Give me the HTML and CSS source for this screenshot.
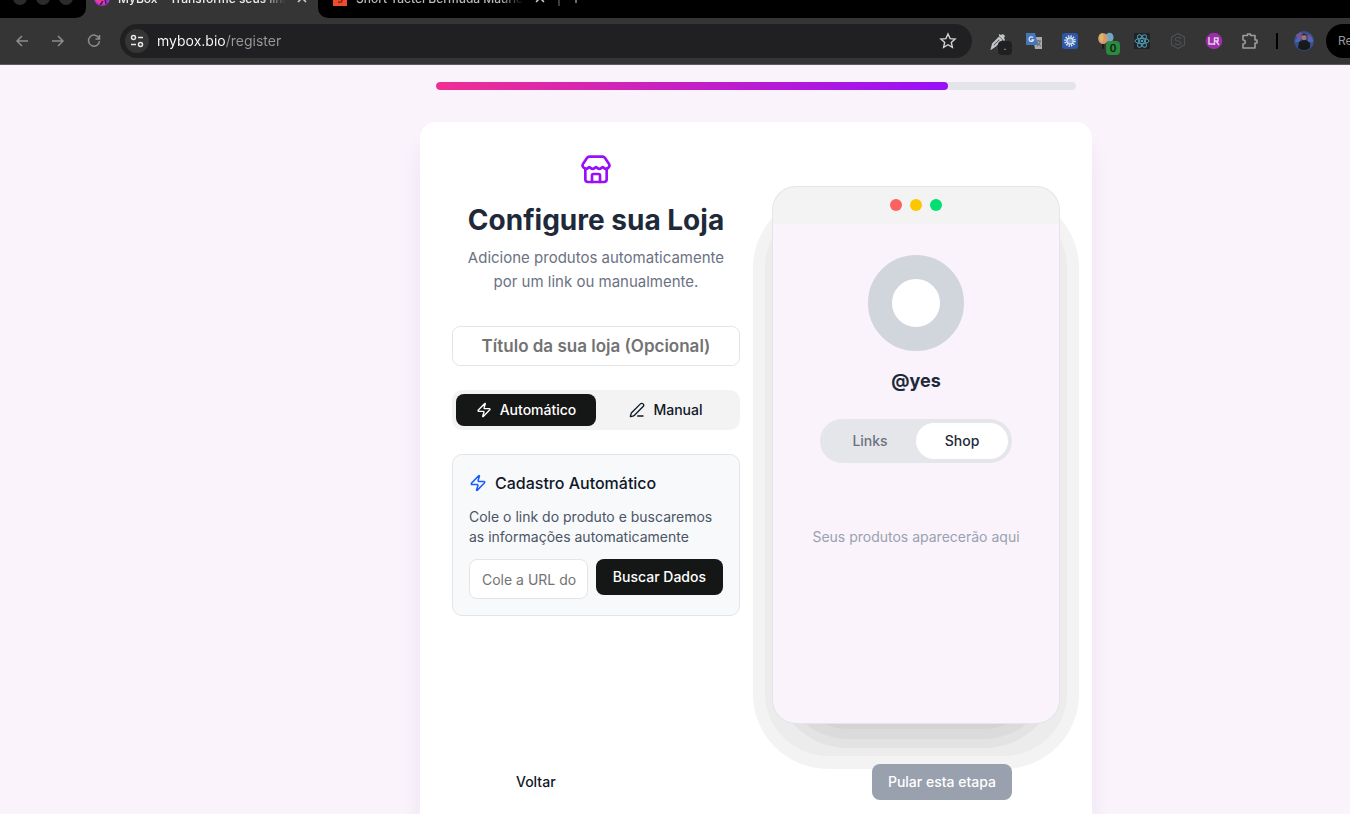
FILE: index.html
```
<!DOCTYPE html>
<html lang="pt-BR">
<head>
    <meta charset="UTF-8">
    <meta name="viewport" content="width=device-width, initial-scale=1.0">
    <title>MyBox - Configure sua Loja</title>
    <link rel="stylesheet" href="styles.css">
</head>
<body>
    <header class="browser">
        <div class="tab-strip">
            <div class="window-dots"><span></span><span></span><span></span></div>
            <div class="browser-tab active">
                <svg class="favicon" viewBox="0 0 16 16"><circle cx="8" cy="8" r="8" fill="#9b35c8"/><path d="M1 8l5 5 3-3 2 4" fill="none" stroke="#f5389c" stroke-width="3"/><path d="M6 15l3-4M11 9l1 5" fill="none" stroke="#3a1d5c" stroke-width="1.500"/></svg>
                <span class="tab-title">MyBox - Transforme seus links</span>
                <button class="tab-close" aria-label="Fechar aba"><svg viewBox="0 0 10 10"><path d="M1 1l8 8M9 1L1 9"/></svg></button>
            </div>
            <div class="browser-tab">
                <svg class="favicon" viewBox="0 0 16 16"><path fill="#ee4d2d" d="M1 3h14v13H1z"/><path d="M10 7c-4-2-5 1-2 2s3 4-2 3" fill="none" stroke="#8a2414" stroke-width="1.5"/></svg>
                <span class="tab-title">Short Tactel Bermuda Mauricinho</span>
                <button class="tab-close" aria-label="Fechar aba"><svg viewBox="0 0 10 10"><path d="M1 1l8 8M9 1L1 9"/></svg></button>
            </div>
            <div class="tab-end">
                <button class="tab-close" aria-label="Nova aba"><svg viewBox="0 0 10 10"><path d="M5 0v10M0 5h10"/></svg></button>
            </div>
        </div>

        <div class="toolbar">
            <nav class="nav-buttons">
                <button class="tool" aria-label="Voltar página"><svg viewBox="0 0 16 16" class="line"><path d="M14 8H3M8 3L3 8l5 5"/></svg></button>
                <button class="tool" aria-label="Avançar página"><svg viewBox="0 0 16 16" class="line"><path d="M2 8h11M8 3l5 5-5 5"/></svg></button>
                <button class="tool" aria-label="Recarregar"><svg viewBox="0 0 16 16" class="line"><path d="M13 5.300A5.500 5.500 0 1 0 13.500 8M13.500 2v4h-4"/></svg></button>
            </nav>

            <div class="address-bar">
                <button class="site-info" aria-label="Informações do site">
                    <svg viewBox="0 0 16 16"><circle cx="4.500" cy="4.500" r="2"/><path d="M9 4.500h5M2 11.500h5"/><circle cx="11.500" cy="11.500" r="2"/></svg>
                </button>
                <input class="url" type="text" value="mybox.bio/register" aria-label="Endereço">
                <button class="tool star" aria-label="Favoritar"><svg viewBox="0 0 18 18"><path d="M9 2l2.100 4.600 5 .5-3.800 3.300 1.100 4.900L9 12.700l-4.400 2.600 1.100-4.900L1.900 7.100l5-.5z"/></svg></button>
            </div>

            <div class="extensions">
                <button class="tool" aria-label="Conta-gotas">
                    <svg viewBox="0 0 18 18"><path d="M3 16l1-4 6-6 2 2-6 6z" fill="#3c4652" stroke="#c4c8cc" stroke-width="2"/><path d="M10 4l5 5 1-1-1-2 1-2-2-2-2 1-2-1z" fill="#c4c4c8"/></svg>
                    <span class="ext-badge dark">.</span>
                </button>
                <button class="tool" aria-label="Tradutor">
                    <svg viewBox="0 0 18 18"><path fill="#a9abae" d="M8 5h9v12h-7z"/><path d="M11 9h5M13.500 8v1M12 14c2-1 3-3 3-5M12 10c1 2 2 3 4 4" stroke="#5d6670" fill="none"/><path fill="#4676b8" d="M1 1h9l3 12H1z"/><path d="M8 5.500A2.300 2.300 0 1 0 8.500 8H6.500" fill="none" stroke="#dce6f5" stroke-width="1.300"/></svg>
                </button>
                <button class="tool" aria-label="Configurações">
                    <svg viewBox="0 0 18 18"><rect x="1" y="1" width="16" height="16" rx="3" fill="#2f57a8"/><circle cx="9" cy="9" r="4.800" fill="none" stroke="#dfe9f7" stroke-width="2" stroke-dasharray="1.300 1.200"/><circle cx="9" cy="9" r="3.200" fill="#7199c9" stroke="#e8eef8" stroke-width="1.200"/></svg>
                </button>
                <button class="tool" aria-label="Balões">
                    <svg viewBox="0 0 18 18"><ellipse cx="12.500" cy="5.500" rx="4" ry="4.800" fill="#70a8c4"/><ellipse cx="6" cy="6.500" rx="4.800" ry="5.500" fill="#d39a72"/><ellipse cx="4.500" cy="5.500" rx="2" ry="4" fill="#e0b568"/><path d="M6 12v5" stroke="#201c1c" stroke-width="2"/></svg>
                    <span class="ext-badge green">0</span>
                </button>
                <button class="tool" aria-label="React">
                    <svg viewBox="0 0 18 18"><path fill="#202427" d="M1 1h16v16H1z"/><g fill="none" stroke="#4f9db3"><ellipse cx="9" cy="9" rx="7" ry="2.700"/><ellipse cx="9" cy="9" rx="7" ry="2.700" transform="rotate(60 9 9)"/><ellipse cx="9" cy="9" rx="7" ry="2.700" transform="rotate(120 9 9)"/></g><circle cx="9" cy="9" r="1.300" fill="#4f9db3"/></svg>
                </button>
                <button class="tool" aria-label="Redux">
                    <svg viewBox="0 0 18 18"><g fill="none" stroke="#4c5054" stroke-width="1.200"><path d="M9 1.500l6.500 3.700v7.600L9 16.500l-6.500-3.700V5.200z"/><path d="M12 6.500c-2-2-6-1-6 1s6 1 6 3-4 3-6 1"/></g></svg>
                </button>
                <button class="tool" aria-label="LR">
                    <svg viewBox="0 0 18 18"><circle cx="9" cy="9" r="8.300" fill="#9b2fa8"/><path d="M4 5v7h5M9.500 13V6h3.500v3H9.500M11 9l3 4" fill="none" stroke="#e8c9ec" stroke-width="1.500"/></svg>
                </button>
                <button class="tool" aria-label="Extensões">
                    <svg viewBox="0 0 18 18"><path d="M2 3.500h4.500V2h3v1.500H14V8h2v3h-2v5H2v-4c3 0 3-4 0-4z" fill="none" stroke="#9a9c9e" stroke-width="1.600" stroke-linejoin="round"/></svg>
                </button>
            </div>
            <span class="divider"></span>
            <button class="tool" aria-label="Perfil">
                <svg class="profile" viewBox="0 0 20 20"><circle cx="10" cy="10" r="10" fill="#384f8c"/><path d="M2 4l5-3 2 5-5 5zM14 3l4 3v6l-4-4z" fill="#74579b"/><path d="M2 8h4v3H1zM14 8h5v3h-5z" fill="#426bbb"/><path d="M4 17l1-6 4-2h3l4 3v5a10 10 0 0 1-12 0z" fill="#18191d"/><ellipse cx="10" cy="6" rx="2.300" ry="3.300" fill="#a4766b"/><path d="M7 5q3-5 6 0l-3-1z" fill="#231e24"/></svg>
            </button>
            <button class="relaunch">Re</button>
        </div>
    </header>

    <main class="page">
        <div class="wizard">
            <div class="progress"><div class="progress-fill" style="width: 80%"></div></div>

            <section class="card">
                <div class="columns">
                    <div class="setup">
                        <div class="intro">
                            <svg class="icon store-icon" viewBox="0 0 24 24"><path d="M15 21v-5a1 1 0 0 0-1-1h-4a1 1 0 0 0-1 1v5"/><path d="M17.774 10.310a1.120 1.120 0 0 0-1.549 0 2.500 2.500 0 0 1-3.451 0 1.120 1.120 0 0 0-1.548 0 2.500 2.500 0 0 1-3.452 0 1.120 1.120 0 0 0-1.549 0 2.500 2.500 0 0 1-3.770-3.248l2.889-4.184A2 2 0 0 1 7 2h10a2 2 0 0 1 1.653.873l2.895 4.192a2.500 2.500 0 0 1-3.774 3.244"/><path d="M4 10.950V19a2 2 0 0 0 2 2h12a2 2 0 0 0 2-2v-8.050"/></svg>
                            <h1>Configure sua Loja</h1>
                            <p>Adicione produtos automaticamente por um link ou manualmente.</p>
                        </div>

                        <input class="field store-title" type="text" placeholder="Título da sua loja (Opcional)" aria-label="Título da sua loja">

                        <div class="mode-tabs">
                            <button class="mode active" type="button">
                                <svg class="icon" viewBox="0 0 24 24"><path d="M4 14a1 1 0 0 1-.78-1.630l9.900-10.200a.5.5 0 0 1 .86.46l-1.920 6.020A1 1 0 0 0 13 10h7a1 1 0 0 1 .78 1.630l-9.900 10.200a.5.5 0 0 1-.86-.46l1.920-6.020A1 1 0 0 0 11 14z"/></svg>
                                Automático
                            </button>
                            <button class="mode" type="button">
                                <svg class="icon" viewBox="0 0 24 24"><path d="M13 21h8"/><path d="M21.174 6.812a1 1 0 0 0-3.986-3.987L3.842 16.174a2 2 0 0 0-.5.83l-1.321 4.352a.5.5 0 0 0 .623.622l4.353-1.320a2 2 0 0 0 .83-.497z"/></svg>
                                Manual
                            </button>
                        </div>

                        <div class="auto-panel">
                            <h2>
                                <svg class="icon" viewBox="0 0 24 24"><path d="M4 14a1 1 0 0 1-.78-1.630l9.900-10.200a.5.5 0 0 1 .86.46l-1.920 6.020A1 1 0 0 0 13 10h7a1 1 0 0 1 .78 1.630l-9.900 10.200a.5.5 0 0 1-.86-.46l1.920-6.020A1 1 0 0 0 11 14z"/></svg>
                                Cadastro Automático
                            </h2>
                            <p>Cole o link do produto e buscaremos as informações automaticamente</p>
                            <form class="fetch-form">
                                <input class="field product-url" type="url" placeholder="Cole a URL do" aria-label="URL do produto">
                                <button class="btn btn-dark" type="button">Buscar Dados</button>
                            </form>
                        </div>
                    </div>

                    <aside class="phone">
                        <div class="phone-header">
                            <span class="dot red"></span>
                            <span class="dot yellow"></span>
                            <span class="dot green"></span>
                        </div>
                        <div class="phone-body">
                            <div class="avatar"></div>
                            <h3>@yes</h3>
                            <div class="switch">
                                <button type="button">Links</button>
                                <button class="active" type="button">Shop</button>
                            </div>
                            <p class="empty">Seus produtos aparecerão aqui</p>
                        </div>
                    </aside>
                </div>

                <div class="actions">
                    <button class="btn btn-ghost" type="button">Voltar</button>
                    <button class="btn btn-muted" type="button">Pular esta etapa</button>
                </div>
            </section>
        </div>
    </main>
</body>
</html>
```
FILE: styles.css
```
* {
    box-sizing: border-box;
}
body {
    margin: 0;
    height: 100vh;
    display: flex;
    flex-direction: column;
    overflow: hidden;
    background: #faf3fc;
    color: #101828;
    font-family: Inter, "Liberation Sans", sans-serif;
    font-size: 14px;
    line-height: 20px;
}
button, input {
    font: inherit;
    color: inherit;
    margin: 0;
    border: none;
}
button {
    padding: 0;
    background: none;
    cursor: pointer;
    white-space: nowrap;
}
h1, h2, h3, p {
    margin: 0;
}
svg {
    display: block;
    flex-shrink: 0;
}

/* browser bar */
.browser {
    flex-shrink: 0;
    background: #353535;
    border-bottom: 1px solid #5c5c5c;
}
.tab-strip {
    display: flex;
    height: 18px;
    overflow: hidden;
    background: #353535;
}
.window-dots {
    display: flex;
    gap: 9px;
    width: 86px;
    padding-left: 13px;
    background: #000;
    border-bottom-right-radius: 10px;
}
.window-dots span {
    width: 14px;
    height: 14px;
    margin-top: -9px;
    border-radius: 50%;
    background: #2b2b2d;
}
.browser-tab {
    display: flex;
    gap: 8px;
    width: 240px;
    padding-left: 14px;
    background: #000;
    color: #b8b8b8;
    font-size: 12px;
    font-weight: 500;
    line-height: 16px;
}
.browser-tab.active {
    width: 232px;
    padding-left: 8px;
    background: #353535;
    color: #eee;
}
.browser-tab:not(.active) {
    border-bottom-left-radius: 10px;
}
.favicon {
    width: 16px;
    height: 16px;
    margin-top: -10px;
}
.tab-title {
    width: 168px;
    margin-top: -9px;
    overflow: hidden;
    white-space: nowrap;
    -webkit-mask-image: linear-gradient(90deg, #000 85%, transparent);
    mask-image: linear-gradient(90deg, #000 85%, transparent);
}
.tab-close {
    width: 10px;
    height: 10px;
    margin: -7px 0 0 3px;
}
.tab-close svg {
    width: 10px;
    height: 10px;
    fill: none;
    stroke: #d0d0d0;
    stroke-width: 1.5;
}
.tab-end {
    flex: 1;
    background: #000;
}
.tab-end .tab-close {
    display: flex;
    width: 24px;
    height: 13px;
    padding: 0 0 0 11px;
    border-left: 2px solid #3c3c3e;
    margin-left: 0;
}
.tab-end svg {
    stroke: #8c8d8f;
}
.toolbar {
    display: flex;
    align-items: center;
    height: 46px;
    padding-left: 4px;
    overflow: hidden;
}
.nav-buttons, .extensions {
    display: flex;
    flex-shrink: 0;
}
.tool {
    position: relative;
    display: flex;
    align-items: center;
    justify-content: center;
    flex-shrink: 0;
    width: 36px;
    height: 34px;
}
.tool svg {
    width: 18px;
    height: 18px;
}
.tool .line {
    width: 16px;
    height: 16px;
    fill: none;
    stroke: #8c8d8f;
    stroke-width: 1.5;
}
.address-bar {
    display: flex;
    align-items: center;
    flex: 1;
    min-width: 0;
    height: 34px;
    margin: 0 8px;
    padding: 0 6px 0 5px;
    border-radius: 17px;
    background: #202022;
}
.site-info {
    display: flex;
    align-items: center;
    justify-content: center;
    width: 24px;
    height: 24px;
    border-radius: 50%;
    background: #353535;
}
.site-info svg {
    width: 16px;
    height: 16px;
    fill: none;
    stroke: #e8e8e8;
    stroke-width: 1.5;
}
.url {
    flex: 1;
    min-width: 0;
    padding: 0 8px;
    outline: none;
    /* host in white, path in grey */
    background: linear-gradient(90deg, #fff 76px, #98999c 76px);
    -webkit-background-clip: text;
    background-clip: text;
    color: transparent;
}
.star svg {
    fill: none;
    stroke: #d0d2d4;
    stroke-width: 1.4;
}
.ext-badge {
    position: absolute;
    left: 18px;
    top: 17px;
    width: 14px;
    height: 14px;
    border-radius: 4px;
    color: #d0d0d0;
    font-size: 10px;
    line-height: 14px;
    text-align: center;
}
.ext-badge.dark {
    background: #202022;
    line-height: 10px;
}
.ext-badge.green {
    background: #2b8a3e;
    color: #0c1d10;
    font-weight: 600;
}
.divider {
    flex-shrink: 0;
    width: 2px;
    height: 16px;
    margin: 0 8px;
    background: #000;
}
.tool .profile {
    width: 20px;
    height: 20px;
}
.relaunch {
    flex-shrink: 0;
    width: 24px;
    height: 34px;
    margin-left: 4px;
    padding-left: 12px;
    overflow: hidden;
    border-radius: 17px 0 0 17px;
    background: #000;
    color: #98999c;
    font-size: 12px;
    text-align: left;
}

/* page */
.page {
    flex: 1;
    min-height: 0;
    padding: 17px 0 0 12%;
}
.wizard {
    display: flex;
    flex-direction: column;
    max-width: 672px;
    height: 100%;
    margin: 0 auto;
}
.progress {
    flex-shrink: 0;
    height: 8px;
    margin: 0 16px 32px;
    border-radius: 4px;
    overflow: hidden;
    background: #e4e5e9;
}
.progress-fill {
    height: 100%;
    border-radius: 4px;
    background: linear-gradient(90deg, #f02e93, #9810fa);
}
.card {
    flex: 1;
    padding: 32px;
    border-radius: 16px 16px 0 0;
    background: #fff;
    box-shadow: 0 20px 25px -5px rgba(40, 30, 100, 0.1);
}
.columns {
    display: grid;
    grid-template-columns: 1fr 1fr;
    gap: 32px;
}
.icon {
    width: 16px;
    height: 16px;
    fill: none;
    stroke: currentColor;
    stroke-width: 2;
    stroke-linecap: round;
    stroke-linejoin: round;
}
.setup {
    display: flex;
    flex-direction: column;
    gap: 24px;
    min-width: 0;
}
.intro {
    margin-bottom: 8px;
    padding: 0 8px;
    text-align: center;
}
.store-icon {
    width: 32px;
    height: 32px;
    margin: 0 auto 16px;
    color: #9810fa;
}
h1 {
    color: #1e2939;
    font-size: 28px;
    font-weight: 700;
    line-height: 36px;
}
.intro p {
    margin-top: 8px;
    color: #6a7282;
    font-size: 15px;
    line-height: 24px;
}
.field {
    width: 100%;
    min-width: 0;
    height: 40px;
    padding: 0 12px;
    border: 1px solid #e5e5e5;
    border-radius: 8px;
    background: #fff;
}
.field::placeholder {
    color: #737373;
    opacity: 1;
}
.store-title {
    font-size: 17px;
    font-weight: 600;
    text-align: center;
}
.mode-tabs {
    display: grid;
    grid-template-columns: 1fr 1fr;
    padding: 4px;
    border-radius: 10px;
    background: #f3f3f4;
}
.mode {
    display: flex;
    align-items: center;
    justify-content: center;
    gap: 8px;
    height: 32px;
    border-radius: 8px;
    font-weight: 500;
}
.mode.active {
    background: #151716;
    color: #fff;
}
.auto-panel {
    padding: 16px;
    border: 1px solid #e3e5e8;
    border-radius: 10px;
    background: #f8f9fb;
}
h2 {
    display: flex;
    align-items: center;
    gap: 8px;
    font-size: 16px;
    font-weight: 500;
    line-height: 24px;
}
h2 .icon {
    width: 18px;
    height: 18px;
    color: #155dfc;
}
.auto-panel p {
    margin: 12px 0;
    color: #4a5565;
}
.fetch-form {
    display: flex;
    align-items: flex-start;
    gap: 8px;
}
.product-url {
    flex: 1;
    width: auto;
    padding-right: 4px;
}
.btn {
    height: 36px;
    padding: 0 16px;
    border-radius: 8px;
    font-weight: 500;
}
.btn-dark {
    padding: 0 17px;
    background: #151716;
    color: #fff;
}
.btn-muted {
    background: #99a1af;
    color: #fff;
}

/* store preview */
.phone {
    position: relative;
    z-index: 0;
    margin-top: 32px;
}
/* stepped shadow under the device */
.phone::before, .phone::after {
    content: "";
    position: absolute;
    inset: 0;
    z-index: -1;
}
.phone::before {
    border-radius: 56px;
    box-shadow:
        0 25px 0 7px #ebeceb,
        0 26px 0 19px #f3f3f3;
}
.phone::after {
    border-radius: 76px;
    box-shadow:
        0 25px 0 -20px #d4d4d4,
        0 25px 0 -10px #dbdbdb,
        0 25px 0 -1px #e3e3e3;
}
.phone-header {
    display: flex;
    align-items: center;
    justify-content: center;
    gap: 8px;
    height: 38px;
    padding-bottom: 2px;
    border: 1px solid #e4e5e6;
    border-bottom: none;
    border-radius: 24px 24px 0 0;
    background: #f3f3f3;
}
.dot {
    width: 12px;
    height: 12px;
    border-radius: 50%;
}
.dot.red {
    background: #fb615e;
}
.dot.yellow {
    background: #fdc700;
}
.dot.green {
    background: #05df72;
}
.phone-body {
    display: flex;
    flex-direction: column;
    align-items: center;
    height: 500px;
    padding-top: 31px;
    border: 1px solid #e4e5e6;
    border-top: none;
    border-radius: 0 0 24px 24px;
    background: #faf3fc;
}
.avatar {
    width: 96px;
    height: 96px;
    border: 24px solid #d1d5dc;
    border-radius: 50%;
    background: #fff;
}
h3 {
    margin: 16px 0 24px;
    color: #1e2939;
    font-size: 18px;
    font-weight: 700;
    line-height: 28px;
}
.switch {
    display: grid;
    grid-template-columns: 1fr 1fr;
    width: 192px;
    padding: 4px;
    border-radius: 22px;
    background: #e5e6ea;
}
.switch button {
    height: 36px;
    border-radius: 18px;
    color: #6a7282;
    font-weight: 500;
}
.switch .active {
    background: #fff;
    color: #1e2939;
}
.empty {
    margin-top: 64px;
    color: #99a1af;
}
.actions {
    position: relative;
    display: flex;
    justify-content: space-between;
    padding: 40px 48px 0;
}
```
